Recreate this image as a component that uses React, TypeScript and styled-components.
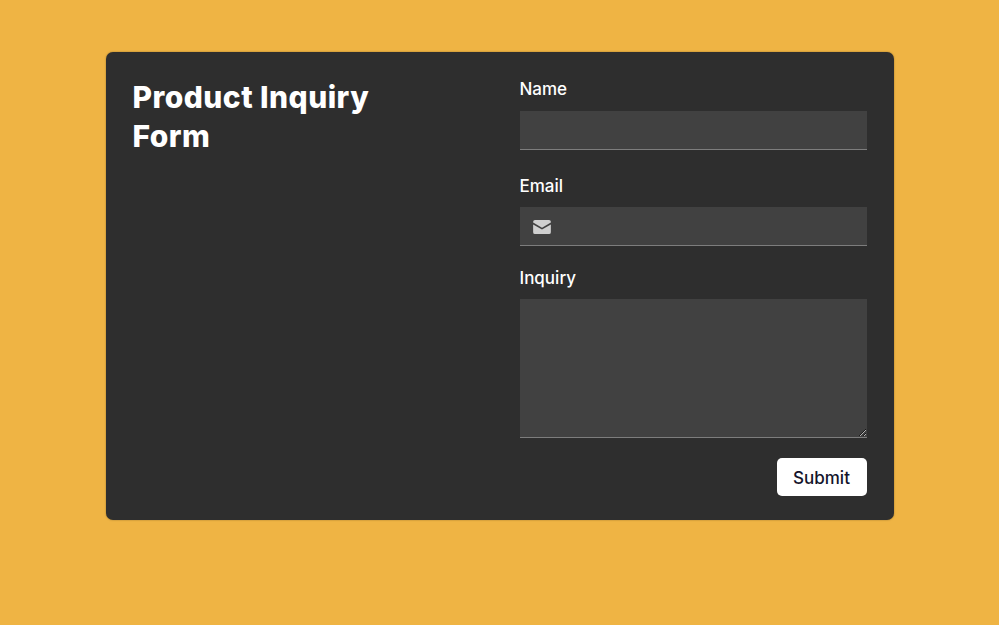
import React from 'react'
import styled, {createGlobalStyle} from 'styled-components'

const GlobalStyle = createGlobalStyle`
  html, body {
    margin: 0;
    padding: 0;
    background: #efb444;
  }

  body {
    font-family: "Inter", "Liberation Sans", sans-serif;
  }
`

const Page = styled.div`
  min-height: 625px;
  box-sizing: border-box;
  padding-top: 52px;
  display: flex;
  justify-content: center;
  background: #efb444;
`

const Card = styled.div`
  width: 788px;
  height: 468px;
  box-sizing: border-box;
  padding: 24px 27px 24px 27px;
  display: grid;
  grid-template-columns: 347px 347px;
  column-gap: 40px;
  background: #2e2e2e;
  border-radius: 7px;
  box-shadow: 0 0 2px rgba(0, 0, 0, 0.35);
`

const Title = styled.h1`
  margin: 2px 0 0;
  max-width: 260px;
  color: #fff;
  font-size: 30px;
  line-height: 39px;
  font-weight: 800;
  letter-spacing: 0.45px;
`

const Form = styled.form`
  display: flex;
  flex-direction: column;
`

const Field = styled.div<{$gap: number}>`
  margin-bottom: ${p => p.$gap}px;
`

const Label = styled.label<{$gap: number}>`
  display: block;
  height: 26px;
  margin-bottom: ${p => p.$gap}px;
  color: #fff;
  font-size: 17px;
  line-height: 26px;
  font-weight: 500;
`

const InputWrap = styled.div`
  position: relative;
  height: 39px;
`

const Input = styled.input<{$icon?: boolean}>`
  display: block;
  width: 100%;
  height: 39px;
  box-sizing: border-box;
  padding: 0 12px 0 ${p => (p.$icon ? '44px' : '12px')};
  border: 0;
  border-bottom: 1px solid #7d7d7d;
  border-radius: 0;
  outline: none;
  background: #414141;
  color: #fff;
`

const Icon = styled.svg`
  position: absolute;
  left: 13px;
  top: 13px;
  width: 18px;
  height: 14px;
  fill: #cfcfcf;
`

const TextArea = styled.textarea`
  display: block;
  width: 100%;
  height: 139px;
  box-sizing: border-box;
  border: 0;
  border-bottom: 1px solid #7d7d7d;
  border-radius: 0;
  outline: none;
  background: #414141;
  color: #fff;
`

const Actions = styled.div`
  display: flex;
  justify-content: flex-end;
`

const SubmitButton = styled.button`
  width: 90px;
  height: 38px;
  padding: 2px 0 0;
  border: 0;
  border-radius: 5px;
  background: #fff;
  color: #14142b;
  font-family: inherit;
  font-size: 17px;
  font-weight: 500;
`

const App = () => {
    return (
        <Page>
            <GlobalStyle/>
            <Card>
                <Title>Product Inquiry Form</Title>
                <Form onSubmit={e => e.preventDefault()}>
                    <Field $gap={23}>
                        <Label htmlFor="name" $gap={9}>Name</Label>
                        <Input id="name" type="text"/>
                    </Field>
                    <Field $gap={19}>
                        <Label htmlFor="email" $gap={8}>Email</Label>
                        <InputWrap>
                            <Icon viewBox="0 0 19 15">
                                <path d="M2 0h15a2 2 0 0 1 2 2v.8l-9.5 5.4L0 2.8V2a2 2 0 0 1 2-2z"/>
                                <path d="M0 4.9l9.5 5.4L19 4.9V13a2 2 0 0 1-2 2H2a2 2 0 0 1-2-2z"/>
                            </Icon>
                            <Input id="email" type="email" $icon/>
                        </InputWrap>
                    </Field>
                    <Field $gap={20}>
                        <Label htmlFor="inquiry" $gap={8}>Inquiry</Label>
                        <TextArea id="inquiry"/>
                    </Field>
                    <Actions>
                        <SubmitButton type="submit">Submit</SubmitButton>
                    </Actions>
                </Form>
            </Card>
        </Page>
    )
}

export default App
